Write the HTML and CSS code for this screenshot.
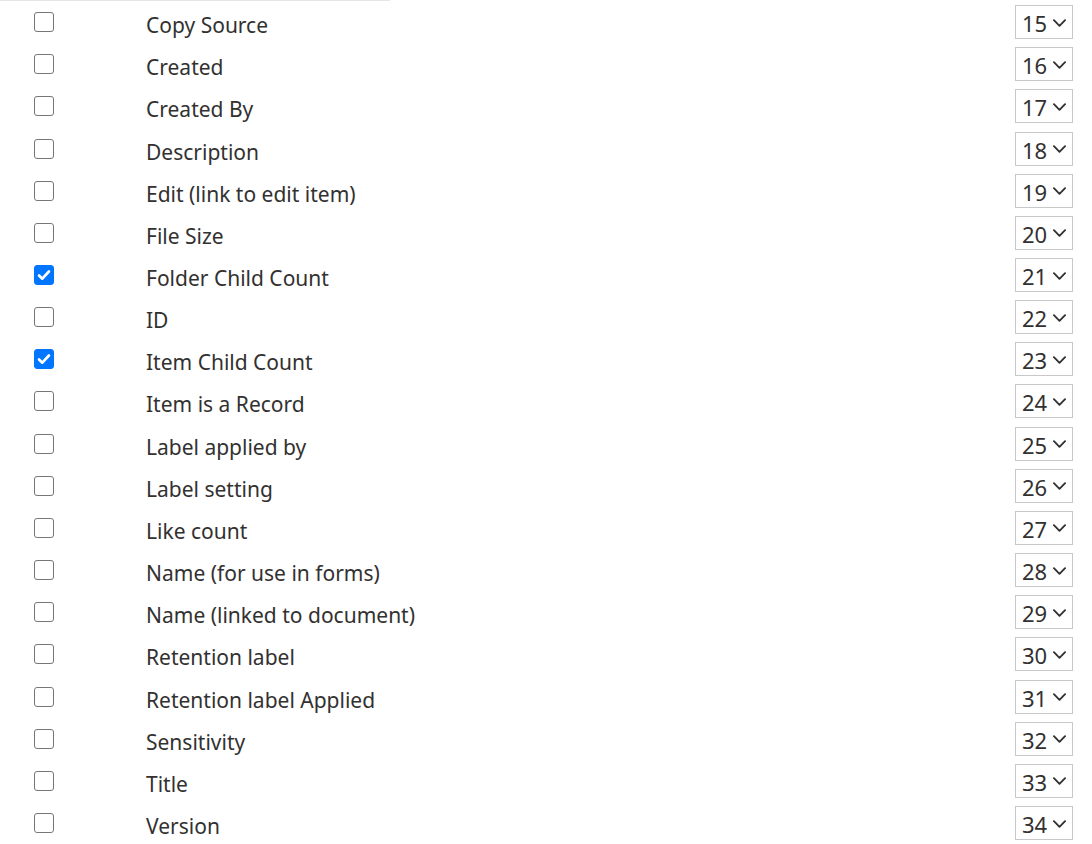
FILE: index.html
```html
<!DOCTYPE html>
<html lang="en">
<head>
<meta charset="utf-8">
<title>Columns</title>
<link rel="stylesheet" href="styles.css">
</head>
<body>
<div class="topline"></div>
<div class="list">
  <div class="row"><span class="cb"></span><span class="label">Copy Source</span><span class="sel">15<svg class="chev" viewBox="0 0 14 8"><path d="M1 1l6 6 6-6"/></svg></span></div>
  <div class="row"><span class="cb"></span><span class="label">Created</span><span class="sel">16<svg class="chev" viewBox="0 0 14 8"><path d="M1 1l6 6 6-6"/></svg></span></div>
  <div class="row"><span class="cb"></span><span class="label">Created By</span><span class="sel">17<svg class="chev" viewBox="0 0 14 8"><path d="M1 1l6 6 6-6"/></svg></span></div>
  <div class="row"><span class="cb"></span><span class="label">Description</span><span class="sel">18<svg class="chev" viewBox="0 0 14 8"><path d="M1 1l6 6 6-6"/></svg></span></div>
  <div class="row"><span class="cb"></span><span class="label">Edit (link to edit item)</span><span class="sel">19<svg class="chev" viewBox="0 0 14 8"><path d="M1 1l6 6 6-6"/></svg></span></div>
  <div class="row"><span class="cb"></span><span class="label">File Size</span><span class="sel">20<svg class="chev" viewBox="0 0 14 8"><path d="M1 1l6 6 6-6"/></svg></span></div>
  <div class="row"><span class="cb checked"><svg viewBox="0 0 20 20"><path d="M4.5 10.5l3.6 3.6 7.4-8"/></svg></span><span class="label">Folder Child Count</span><span class="sel">21<svg class="chev" viewBox="0 0 14 8"><path d="M1 1l6 6 6-6"/></svg></span></div>
  <div class="row"><span class="cb"></span><span class="label">ID</span><span class="sel">22<svg class="chev" viewBox="0 0 14 8"><path d="M1 1l6 6 6-6"/></svg></span></div>
  <div class="row"><span class="cb checked"><svg viewBox="0 0 20 20"><path d="M4.5 10.5l3.6 3.6 7.4-8"/></svg></span><span class="label">Item Child Count</span><span class="sel">23<svg class="chev" viewBox="0 0 14 8"><path d="M1 1l6 6 6-6"/></svg></span></div>
  <div class="row"><span class="cb"></span><span class="label">Item is a Record</span><span class="sel">24<svg class="chev" viewBox="0 0 14 8"><path d="M1 1l6 6 6-6"/></svg></span></div>
  <div class="row"><span class="cb"></span><span class="label">Label applied by</span><span class="sel">25<svg class="chev" viewBox="0 0 14 8"><path d="M1 1l6 6 6-6"/></svg></span></div>
  <div class="row"><span class="cb"></span><span class="label">Label setting</span><span class="sel">26<svg class="chev" viewBox="0 0 14 8"><path d="M1 1l6 6 6-6"/></svg></span></div>
  <div class="row"><span class="cb"></span><span class="label">Like count</span><span class="sel">27<svg class="chev" viewBox="0 0 14 8"><path d="M1 1l6 6 6-6"/></svg></span></div>
  <div class="row"><span class="cb"></span><span class="label">Name (for use in forms)</span><span class="sel">28<svg class="chev" viewBox="0 0 14 8"><path d="M1 1l6 6 6-6"/></svg></span></div>
  <div class="row"><span class="cb"></span><span class="label">Name (linked to document)</span><span class="sel">29<svg class="chev" viewBox="0 0 14 8"><path d="M1 1l6 6 6-6"/></svg></span></div>
  <div class="row"><span class="cb"></span><span class="label">Retention label</span><span class="sel">30<svg class="chev" viewBox="0 0 14 8"><path d="M1 1l6 6 6-6"/></svg></span></div>
  <div class="row"><span class="cb"></span><span class="label">Retention label Applied</span><span class="sel">31<svg class="chev" viewBox="0 0 14 8"><path d="M1 1l6 6 6-6"/></svg></span></div>
  <div class="row"><span class="cb"></span><span class="label">Sensitivity</span><span class="sel">32<svg class="chev" viewBox="0 0 14 8"><path d="M1 1l6 6 6-6"/></svg></span></div>
  <div class="row"><span class="cb"></span><span class="label">Title</span><span class="sel">33<svg class="chev" viewBox="0 0 14 8"><path d="M1 1l6 6 6-6"/></svg></span></div>
  <div class="row"><span class="cb"></span><span class="label">Version</span><span class="sel">34<svg class="chev" viewBox="0 0 14 8"><path d="M1 1l6 6 6-6"/></svg></span></div>
</div>
</body>
</html>
```

FILE: styles.css
```css
html, body {
  margin: 0;
  padding: 0;
  background: #ffffff;
}
body {
  font-family: "Noto Sans", "Open Sans", sans-serif;
  color: #323130;
  overflow: hidden;
}
.topline {
  width: 390px;
  height: 1px;
  background: #e6e6e6;
}
.list {
  display: flex;
  flex-direction: column;
  padding-right: 19px;
}
.row {
  height: 42.16px;
  display: flex;
  align-items: center;
}
.cb {
  box-sizing: border-box;
  width: 20px;
  height: 20px;
  margin-left: 34px;
  border: 1.5px solid #767676;
  border-radius: 3px;
  flex: none;
  display: flex;
  align-items: center;
  justify-content: center;
}
.cb.checked {
  background: #0075ff;
  border-color: #0075ff;
}
.cb svg {
  width: 20px;
  height: 20px;
  fill: none;
  stroke: #ffffff;
  stroke-width: 3;
  stroke-linecap: round;
  stroke-linejoin: round;
}
.label {
  margin-left: 92px;
  font-size: 21px;
  flex: 1;
  white-space: nowrap;
  line-height: 1;
  padding-top: 7px;
}
.sel {
  box-sizing: border-box;
  width: 58px;
  height: 34px;
  border: 1px solid #c8c8c8;
  display: flex;
  align-items: center;
  padding-left: 6px;
  padding-top: 2px;
  font-size: 22px;
  line-height: 1;
  color: #323130;
  flex: none;
}
.chev {
  width: 13px;
  height: 8px;
  margin-left: 6px;
  margin-top: -1px;
  fill: none;
  stroke: #323130;
  stroke-width: 2;
  stroke-linecap: round;
  stroke-linejoin: round;
}
```
